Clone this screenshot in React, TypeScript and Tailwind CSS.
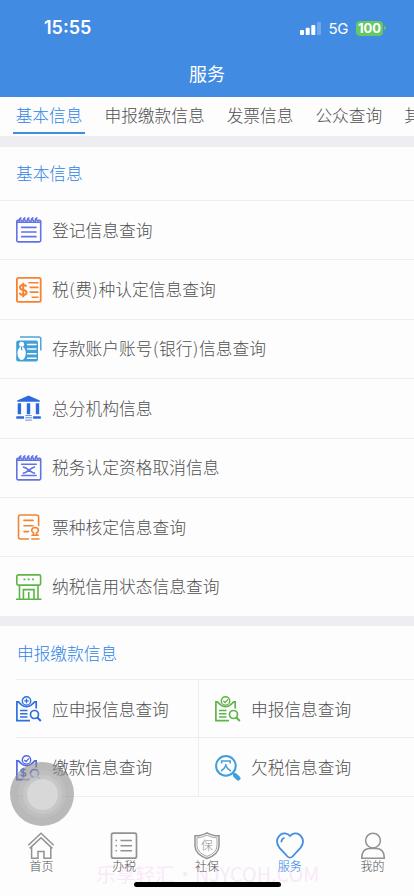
import type { ReactNode } from "react";

const NotepadIcon = ({ cancelled = false }: { cancelled?: boolean }) => (
    <svg className="w-[26px] h-[26px]" viewBox="0 0 26 26" fill="none" stroke="#6274e3" strokeWidth="1.4" strokeLinecap="round">
        <path d="M3 3.2H1.8Q.8 3.2.8 4.4V23.6Q.8 24.9 2 24.9H23.4Q24.7 24.9 24.7 23.6V4.4Q24.7 3.2 23.6 3.2H22.6" strokeWidth="1.6" />
        <path d="M1 5.2H24.5" strokeWidth="1.6" />
        {[3, 7, 11, 15, 19].map((x) => (
            <path key={x} d={`M${x} 4.4Q${x + 0.2} 1.4 ${x + 1.6} .9Q${x + 1.2} 3 ${x + 2.8} 4.2`} strokeWidth="1.5" />
        ))}
        {cancelled ? (
            <>
                <path d="M5.6 9.3H20.2M5.8 20.5H20.2" strokeWidth="1.6" />
                <path d="M7.6 12.2Q9.5 12.4 13 15.2T18.4 18.2M18.4 12.2Q16.5 12.4 13 15.2T7.6 18.2" strokeWidth="1.7" />
            </>
        ) : (
            <path d="M5.7 10.3H20M5.7 15H20M5.7 19.7H20" strokeWidth="1.7" />
        )}
    </svg>
);

const TaxTypeIcon = () => (
    <svg className="w-[26px] h-[26px]" viewBox="0 0 26 26" fill="none" stroke="#f5832f" strokeWidth="1.6">
        <rect x=".9" y=".9" width="23.8" height="24" rx="1.6" strokeWidth="1.8" />
        <path d="M10.4 9.7Q9.8 8 7.2 8Q4 8 4 10.4Q4 12.3 7.2 12.9Q10.6 13.5 10.6 15.6Q10.6 18 7.2 18Q4.3 18 3.6 15.7M7.2 5.8V20.2" strokeWidth="2" />
        <path d="M12.3 5.8H22.5M13.6 10.4H22.5M13.6 15.1H22.5M15.6 20.2H22.5" />
    </svg>
);

const AccountIcon = () => (
    <svg className="w-[26px] h-[26px]" viewBox="0 0 26 26" fill="none">
        <path d="M4 1H22.8Q24.8 1 24.8 3V14.5" stroke="#4ba4db" strokeWidth="1.5" />
        <rect x=".2" y="4.4" width="21.8" height="21" rx="2" fill="#42a0d9" />
        <ellipse cx="5.6" cy="17.3" rx="4.1" ry="6.8" fill="#fff" />
        <circle cx="5.6" cy="8.3" r="2.5" fill="#fff" />
        <path d="M5.6 10.8V14.2" stroke="#42a0d9" strokeWidth="1.2" />
        <path d="M11.6 8.4H20M11.6 13H20M11.6 17.8H20M11.6 22.3H20" stroke="#fff" strokeWidth="1.5" strokeLinecap="round" />
    </svg>
);

const BankIcon = () => (
    <svg className="w-[26px] h-[26px]" viewBox="0 0 26 26" fill="#2c6bdf">
        <path d="M12.5.4L23.8 5.4V6.8H1.2V5.4z" />
        <path d="M1.7 8.3H5.1V19.3H1.7zM10.8 8.3H14.2V19.3H10.8zM19.8 8.3H23.2V19.3H19.8z" />
        <path d="M.3 21.3H8V23.7H.3zM17.1 21.3H24.8V23.7H17.1z" />
        <path d="M9.3 20.6H15.8M9 22.8H16.2M9.3 25.1H15.8" stroke="#5b8ee3" strokeWidth="1" />
    </svg>
);

const TicketIcon = () => (
    <svg className="w-[26px] h-[26px]" viewBox="0 0 26 26" fill="none" stroke="#f08433" strokeWidth="1.6" strokeLinecap="round">
        <path d="M12.5 25H4.5Q2.5 25 2.5 23V3Q2.5 1 4.5 1H20.5Q22.6 1 22.6 3V11.5" />
        <path d="M8 6.4H17M8 11.7H17M8 17.6H12.5" />
        <path d="M17.5 21V18.9Q15.7 17.8 15.7 16.3Q15.9 13.6 19 13.5Q22.3 13.6 22.4 16.3Q22.4 17.8 20.6 18.9V21M16 21.3H22.2M15.8 25H23" strokeWidth="1.6" />
    </svg>
);

const StoreIcon = () => (
    <svg className="w-[26px] h-[26px]" viewBox="0 0 26 26" fill="none" stroke="#5db548" strokeWidth="1.6">
        <rect x=".8" y=".9" width="23.8" height="10.2" rx="1.3" />
        <path d="M3.5 11.2V25M22 11.2V25M0 25.2H25.5M7.4 25V15.6H18V25M12.7 18V25" />
        <path d="M7.5 5.4H9.3M11.8 5.4H13.6M16.1 5.4H17.9" strokeWidth="1.8" />
    </svg>
);

type DeclareProps = { color: string; mark: "plus" | "check"; money?: boolean };

const DeclareIcon = ({ color, mark, money = false }: DeclareProps) => (
    <svg className="w-[26px] h-[26px]" viewBox="0 0 26 26" fill="none" stroke={color} strokeWidth="1.7">
        <path d="M14 24.7H.9V5.8H2.4L5.6 8.9Q10.5 12.5 15.5 8.9L18.7 5.8H20.2V12.5" />
        <circle cx="10.5" cy="4.9" r="4.2" strokeWidth="1.4" />
        {mark === "plus" ? (
            <path d="M10.5 2.6V7.2M8.2 4.9H12.8" strokeWidth="1.3" />
        ) : (
            <path d="M8.3 4.9L10.1 6.5L13 3.4" strokeWidth="1.3" />
        )}
        {money ? (
            <path d="M9.8 15.2Q9.1 14 7.3 14Q5 14.1 5 15.7Q5 17 7.3 17.4Q9.8 17.9 9.8 19.4Q9.8 21 7.3 21Q5.3 21 4.7 19.5M7.3 12.7V22.4" strokeWidth="1.5" />
        ) : (
            <path d="M4 14.4H11.5M4 17.8H11.5M4 21.1H11.5" strokeWidth="1.5" />
        )}
        <circle cx="18.5" cy="18.5" r="4" />
        <path d="M21.4 21.5L24.8 25" strokeWidth="2" />
    </svg>
);

const DebtIcon = () => (
    <svg className="w-[26px] h-[26px]" viewBox="0 0 26 26" fill="none" stroke="#419fd9" strokeWidth="1.6">
        <circle cx="10.9" cy="10.9" r="9.8" strokeWidth="2" />
        <path d="M6.6 8.4V6H15.2V8.4M10.8 9V10.5Q9.5 14 6 16M10.8 10.5Q12 14 15.9 16" strokeWidth="1.5" />
        <path d="M17.7 17.8L20 20" strokeWidth="2" />
        <path d="M20.2 20.3L23.3 23.3" strokeWidth="4.4" strokeLinecap="round" />
    </svg>
);

// Half-width brackets get a little room on both sides
const Label = ({ text }: { text: string }) => (
    <span className="ml-[10px]">
        {text.split(/([()])/).map((part, i) =>
            part === "(" || part === ")" ? (
                <span key={i} className="px-[0.6px]">{part}</span>
            ) : (
                part
            )
        )}
    </span>
);

const tabs = ["基本信息", "申报缴款信息", "发票信息", "公众查询", "其他"];

const basicItems: { label: string; icon: ReactNode }[] = [
    { label: "登记信息查询", icon: <NotepadIcon /> },
    { label: "税(费)种认定信息查询", icon: <TaxTypeIcon /> },
    { label: "存款账户账号(银行)信息查询", icon: <AccountIcon /> },
    { label: "总分机构信息", icon: <BankIcon /> },
    { label: "税务认定资格取消信息", icon: <NotepadIcon cancelled /> },
    { label: "票种核定信息查询", icon: <TicketIcon /> },
    { label: "纳税信用状态信息查询", icon: <StoreIcon /> },
];

const declareItems: { label: string; icon: ReactNode }[] = [
    { label: "应申报信息查询", icon: <DeclareIcon color="#2f6fdc" mark="plus" /> },
    { label: "申报信息查询", icon: <DeclareIcon color="#5db548" mark="check" /> },
    { label: "缴款信息查询", icon: <DeclareIcon color="#5069e0" mark="check" money /> },
    { label: "欠税信息查询", icon: <DebtIcon /> },
];

const navItems: { label: string; icon: ReactNode }[] = [
    {
        label: "首页",
        icon: (
            <>
                <path d="M1.3 14.3L14 2.3L26.7 14.3" />
                <path d="M2.7 17.4L14 6.8L25.3 17.4M4.6 15.5V27.2H11V20.5H17V27.2H23.8V15.5" />
            </>
        ),
    },
    {
        label: "办税",
        icon: (
            <>
                <rect x="1.5" y="2.2" width="25" height="25" rx="2" strokeWidth="1.7" />
                <path d="M10.5 9.6H22M10.5 14.7H22M10.5 19.8H22M5.5 9.6H7M5.5 14.7H7M5.5 19.8H7" />
            </>
        ),
    },
    {
        label: "社保",
        icon: (
            <>
                <path d="M14 1.8Q19 4.8 26 4.8V15Q25.6 23.5 14 27.5Q2.4 23.5 2 15V4.8Q9 4.8 14 1.8z" />
                <path d="M14 4.2Q18.5 6.7 24 6.8V15Q23.5 22 14 25.4Q4.5 22 4 15V6.8Q9.5 6.7 14 4.2z" strokeWidth=".8" />
                <text x="14" y="19" textAnchor="middle" fontSize="12" fill="#929292" stroke="none">保</text>
            </>
        ),
    },
    {
        label: "服务",
        icon: (
            <>
                <path d="M14 26.7Q12.6 26.7 11.5 25.5L3.5 16.8Q-.1 12.5 1.5 7.6Q4 2 9.3 2.3Q12.2 2.6 14 5Q15.8 2.6 18.7 2.3Q24 2 26.5 7.6Q28.1 12.5 24.5 16.8L16.5 25.5Q15.4 26.7 14 26.7z" strokeWidth="1.8" />
                <path d="M5.3 11.2Q5.6 7.6 8.6 6.8" strokeWidth="1.7" />
            </>
        ),
    },
    {
        label: "我的",
        icon: (
            <>
                <circle cx="14" cy="9.6" r="7.4" />
                <path d="M2.7 27.2Q2.8 18 10.2 17.6H17.8Q25.2 18 25.3 27.2z" />
            </>
        ),
    },
];

export default function App() {
    return (
        <div className="relative flex flex-col w-[414px] h-[896px] overflow-hidden bg-[#fdfdfe] text-[#505050] font-light font-['Noto_Sans_CJK_SC',sans-serif]">
            {/* Status bar and title */}
            <header className="h-[97px] shrink-0 bg-[#418be2] text-white">
                <div className="flex items-center h-14 pl-[44px] pr-[28px] font-['Inter',sans-serif]">
                    <span className="text-[18px] font-semibold leading-none">15:55</span>
                    <svg className="w-[21px] h-[13px] ml-auto" viewBox="0 0 21 13" fill="#fff">
                        <rect x="0" y="8" width="4" height="5" rx="1" />
                        <rect x="5.7" y="5.7" width="4" height="7.3" rx="1" />
                        <rect x="11.3" y="3" width="4" height="10" rx="1" />
                        <rect x="17" y="0" width="4" height="13" rx="1" opacity=".25" />
                    </svg>
                    <span className="ml-[7px] text-[15px] font-normal leading-none tracking-[-0.4px]">5G</span>
                    <span className="flex items-center justify-center w-[27px] h-[15px] ml-[8px] rounded-[4px] bg-[#66c765] text-[13px] font-bold leading-none">100</span>
                    <span className="w-[2px] h-[4px] ml-px rounded-r-full bg-[#66c765]" />
                </div>
                <h1 className="pt-[4px] text-center text-[18px] leading-[26px] font-normal">服务</h1>
            </header>

            {/* Tabs */}
            <nav className="flex shrink-0 h-[39px] pl-[13px] text-[16.7px] whitespace-nowrap overflow-hidden">
                {tabs.map((tab, i) => (
                    <div
                        key={tab}
                        className={
                            i === 0
                                ? "shrink-0 h-[37px] w-[72px] mr-[19.5px] text-center leading-[37px] text-[#2f84e6] border-b-2 border-[#418be2]"
                                : "shrink-0 h-[37px] mr-[22px] leading-[37px]"
                        }
                    >
                        {tab}
                    </div>
                ))}
            </nav>
            <div className="h-[11px] shrink-0 bg-[#eeedf2]" />

            {/* Basic info */}
            <section className="shrink-0">
                <h2 className="h-[53px] pl-4 text-[16.7px] leading-[53px] font-light text-[#2f84e6]">基本信息</h2>
                {basicItems.map((item) => (
                    <div key={item.label} className="flex items-center h-[59.4px] pl-4 border-t border-[#eeeef1] text-[16.75px]">
                        {item.icon}
                        <Label text={item.label} />
                    </div>
                ))}
            </section>
            <div className="h-[10px] shrink-0 bg-[#eeedf2]" />

            {/* Declaration and payment */}
            <section className="shrink-0">
                <h2 className="h-[53px] pl-[17px] text-[16.7px] leading-[54px] font-light text-[#2f84e6]">申报缴款信息</h2>
                <div className="grid grid-cols-[183px_1fr] ml-4 border-t border-[#eeeef1] text-[16.7px]">
                    {declareItems.map((item, i) => (
                        <div
                            key={item.label}
                            className={
                                i % 2 === 0
                                    ? "flex items-center h-[58.5px] pt-[2px] border-b border-r border-[#eeeef1]"
                                    : "flex items-center h-[58.5px] pt-[2px] pl-4 border-b border-[#eeeef1]"
                            }
                        >
                            {item.icon}
                            <Label text={item.label} />
                        </div>
                    ))}
                </div>
            </section>

            {/* Watermark */}
            <div className="absolute left-[96px] top-[862px] whitespace-nowrap text-[19.8px] leading-6 font-normal text-[#f4cdf0]/45 pointer-events-none">
                乐享轻汇・NJYCOH.COM
            </div>

            {/* Bottom navigation */}
            <footer className="relative grid grid-cols-5 mt-auto h-[65px] shrink-0 text-[12px]">
                {navItems.map((item) => (
                    <div
                        key={item.label}
                        className={
                            item.label === "服务"
                                ? "flex flex-col items-center text-[#2f84e6]"
                                : "flex flex-col items-center text-[#505050]"
                        }
                    >
                        <svg
                            className="w-7 h-[29px]"
                            viewBox="0 0 28 29"
                            fill="none"
                            stroke={item.label === "服务" ? "#418be2" : "#929292"}
                            strokeWidth="1.5"
                        >
                            {item.icon}
                        </svg>
                        <span className="-mt-[2px] leading-[15px]">{item.label}</span>
                    </div>
                ))}
            </footer>

            {/* Home indicator */}
            <div className="absolute left-[134px] top-[882px] w-[147px] h-[5px] rounded-full bg-black" />

            {/* Floating assistive button */}
            <div className="absolute left-[10px] top-[762px] flex items-center justify-center size-16 rounded-full bg-[#8c8c8c]/60">
                <div className="flex items-center justify-center size-12 rounded-full bg-[#c8c8c8]/40">
                    <div className="flex items-center justify-center size-[39px] rounded-full bg-[#cdcdcd]/60">
                        <div className="size-[31px] rounded-full bg-[#d8d8d8]" />
                    </div>
                </div>
            </div>
        </div>
    );
}
